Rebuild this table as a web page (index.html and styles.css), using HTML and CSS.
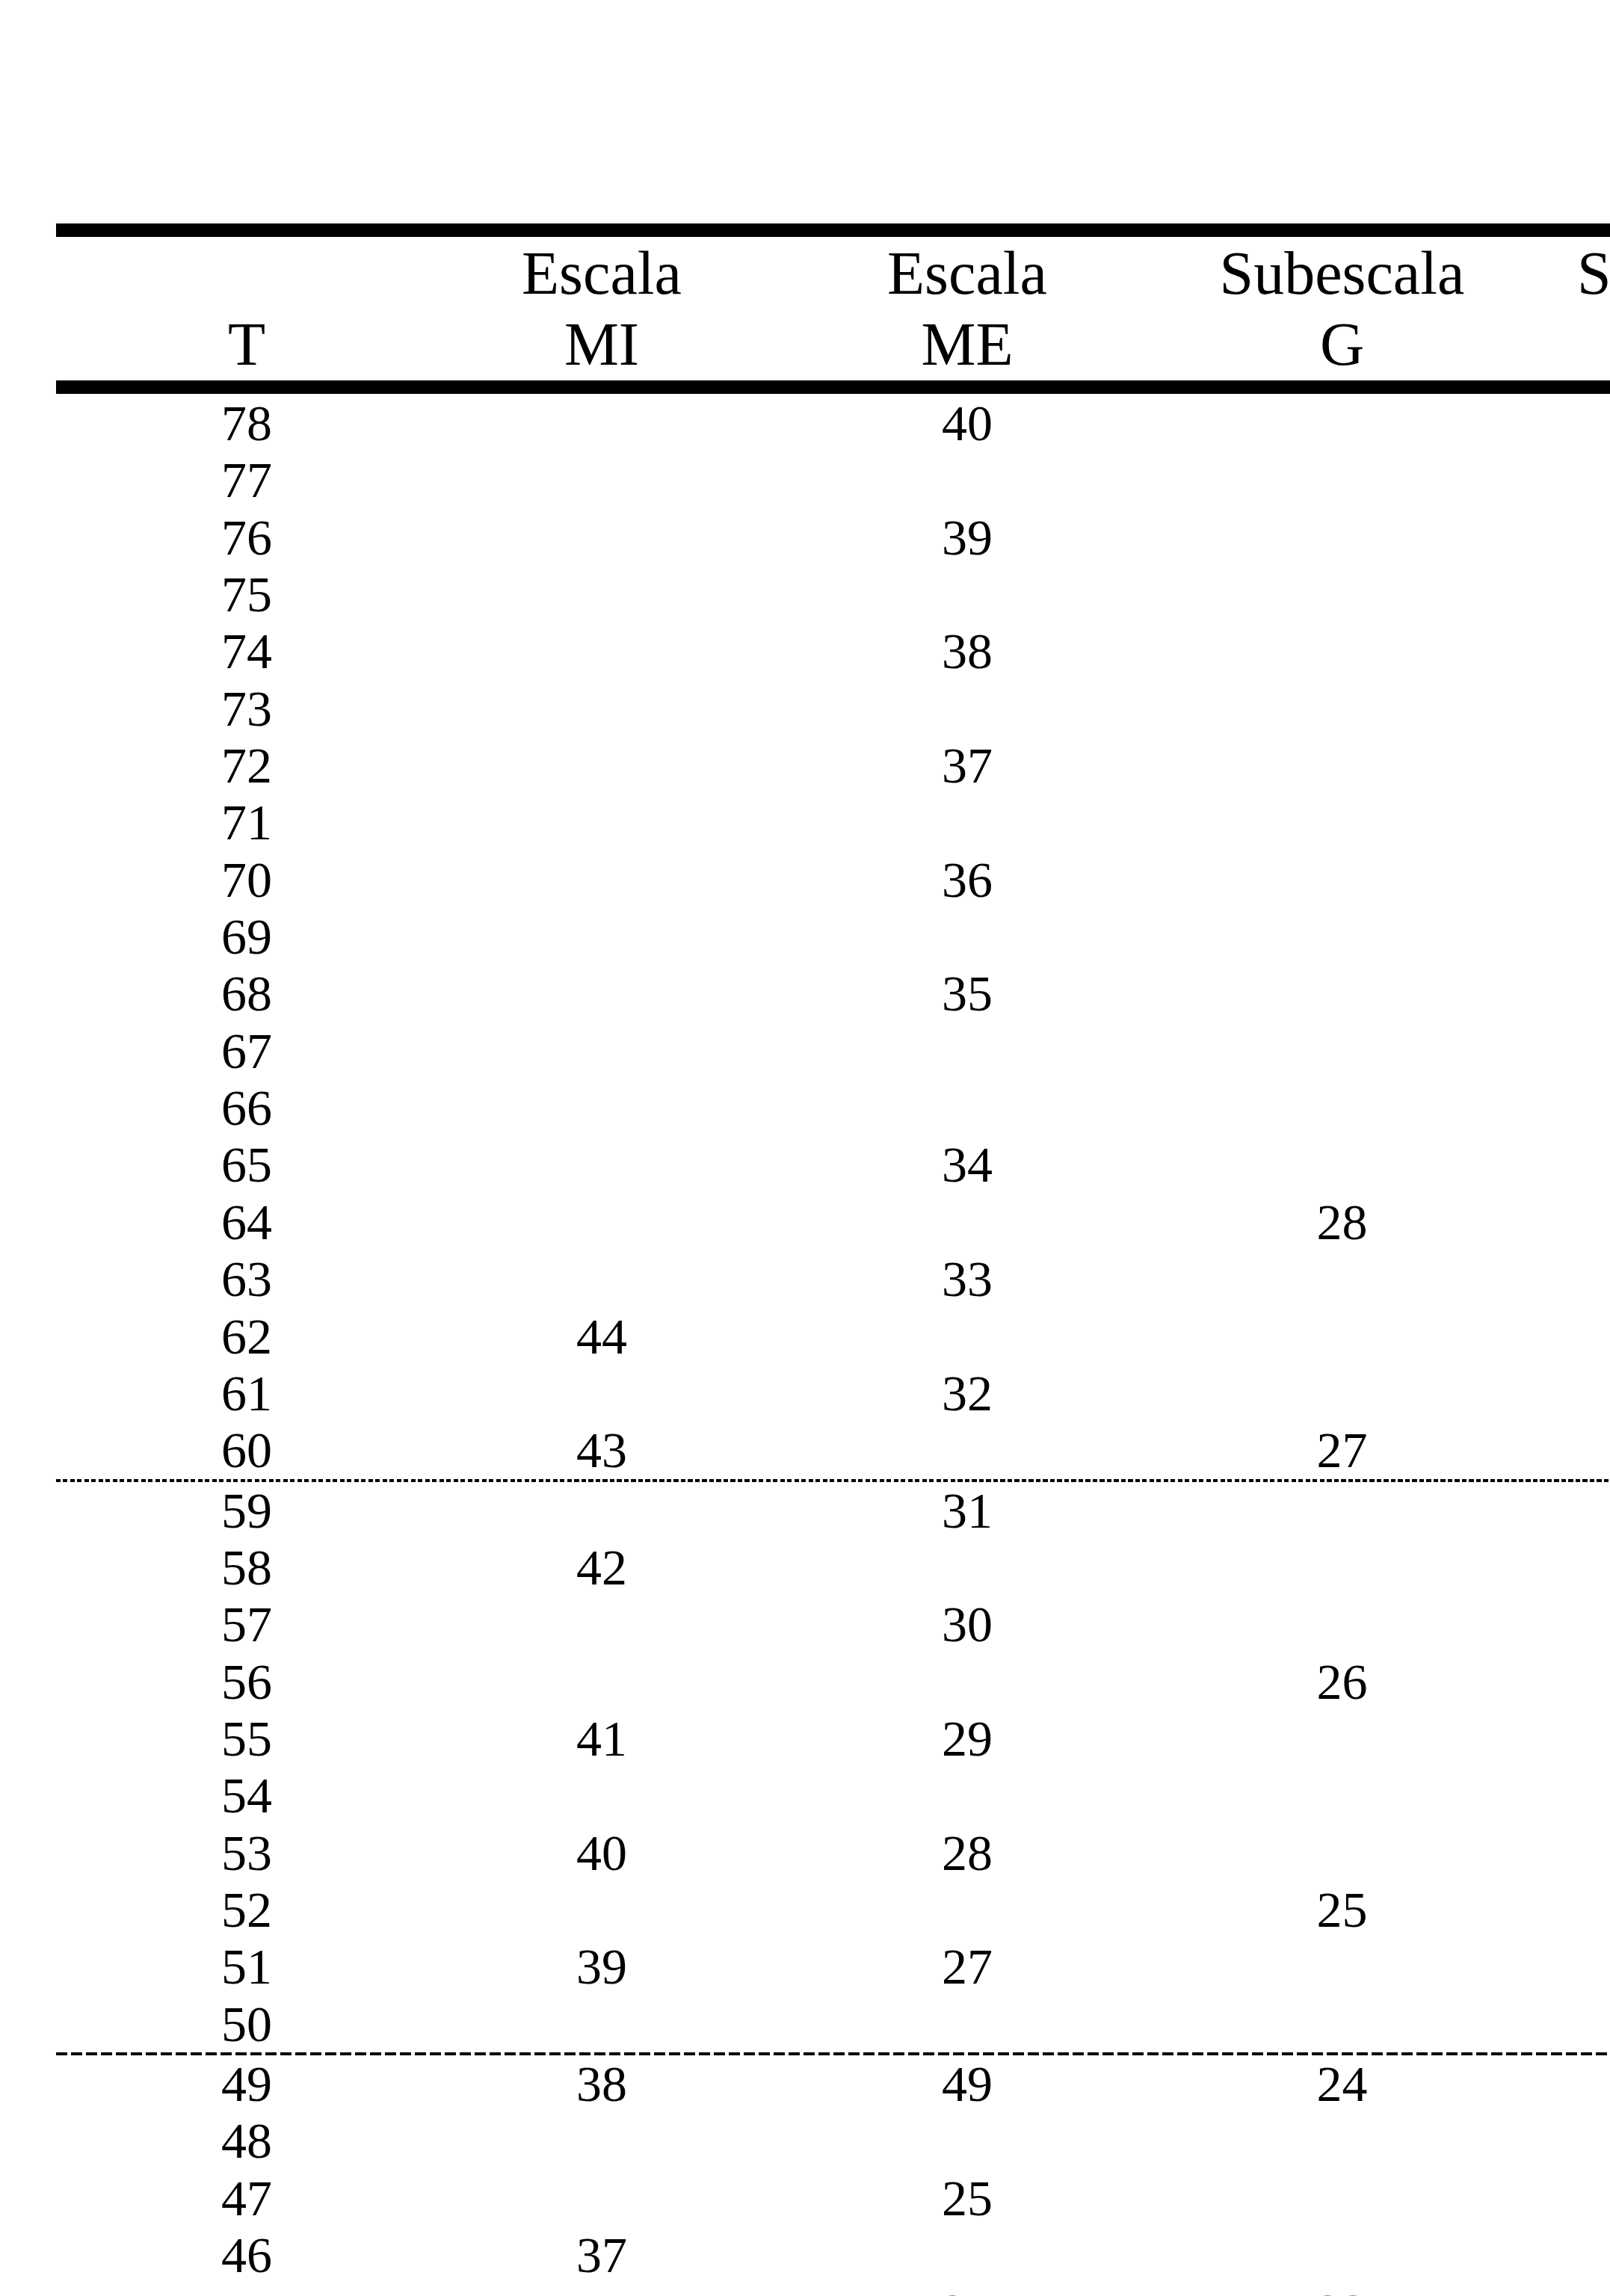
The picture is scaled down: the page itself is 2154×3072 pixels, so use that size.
FILE: index.html
```html
<!DOCTYPE html>
<html lang="es">
<head>
<meta charset="utf-8">
<title>Tabla T</title>
<link rel="stylesheet" href="styles.css">
</head>
<body>
<div class="table">
  <div class="rule-thick"></div>
  <div class="head">
    <div class="hcell"><div class="hline">&nbsp;</div><div class="hline">T</div></div>
    <div class="hcell"><div class="hline">Escala</div><div class="hline">MI</div></div>
    <div class="hcell"><div class="hline">Escala</div><div class="hline">ME</div></div>
    <div class="hcell"><div class="hline">Subescala</div><div class="hline">G</div></div>
    <div class="hcell"><div class="hline">Subescala</div><div class="hline">&nbsp;</div></div>
  </div>
  <div class="rule-thick"></div>

  <div class="group group-first">
    <div class="row"><div>78</div><div></div><div>40</div><div></div><div></div></div>
    <div class="row"><div>77</div><div></div><div></div><div></div><div></div></div>
    <div class="row"><div>76</div><div></div><div>39</div><div></div><div></div></div>
    <div class="row"><div>75</div><div></div><div></div><div></div><div></div></div>
    <div class="row"><div>74</div><div></div><div>38</div><div></div><div></div></div>
    <div class="row"><div>73</div><div></div><div></div><div></div><div></div></div>
    <div class="row"><div>72</div><div></div><div>37</div><div></div><div></div></div>
    <div class="row"><div>71</div><div></div><div></div><div></div><div></div></div>
    <div class="row"><div>70</div><div></div><div>36</div><div></div><div></div></div>
    <div class="row"><div>69</div><div></div><div></div><div></div><div></div></div>
    <div class="row"><div>68</div><div></div><div>35</div><div></div><div></div></div>
    <div class="row"><div>67</div><div></div><div></div><div></div><div></div></div>
    <div class="row"><div>66</div><div></div><div></div><div></div><div></div></div>
    <div class="row"><div>65</div><div></div><div>34</div><div></div><div></div></div>
    <div class="row"><div>64</div><div></div><div></div><div>28</div><div></div></div>
    <div class="row"><div>63</div><div></div><div>33</div><div></div><div></div></div>
    <div class="row"><div>62</div><div>44</div><div></div><div></div><div></div></div>
    <div class="row"><div>61</div><div></div><div>32</div><div></div><div></div></div>
    <div class="row"><div>60</div><div>43</div><div></div><div>27</div><div></div></div>
  </div>
  <div class="rule-dotted"></div>

  <div class="group">
    <div class="row"><div>59</div><div></div><div>31</div><div></div><div></div></div>
    <div class="row"><div>58</div><div>42</div><div></div><div></div><div></div></div>
    <div class="row"><div>57</div><div></div><div>30</div><div></div><div></div></div>
    <div class="row"><div>56</div><div></div><div></div><div>26</div><div></div></div>
    <div class="row"><div>55</div><div>41</div><div>29</div><div></div><div></div></div>
    <div class="row"><div>54</div><div></div><div></div><div></div><div></div></div>
    <div class="row"><div>53</div><div>40</div><div>28</div><div></div><div></div></div>
    <div class="row"><div>52</div><div></div><div></div><div>25</div><div></div></div>
    <div class="row"><div>51</div><div>39</div><div>27</div><div></div><div></div></div>
    <div class="row"><div>50</div><div></div><div></div><div></div><div></div></div>
  </div>
  <div class="rule-dashed"></div>

  <div class="group">
    <div class="row"><div>49</div><div>38</div><div>49</div><div>24</div><div></div></div>
    <div class="row"><div>48</div><div></div><div></div><div></div><div></div></div>
    <div class="row"><div>47</div><div></div><div>25</div><div></div><div></div></div>
    <div class="row"><div>46</div><div>37</div><div></div><div></div><div></div></div>
    <div class="row"><div>45</div><div></div><div>24</div><div>23</div><div></div></div>
  </div>
</div>
</body>
</html>
```

FILE: styles.css
```css
html, body {
  margin: 0;
  padding: 0;
  background: #ffffff;
  overflow: hidden;
}

body {
  font-family: "Liberation Serif", "Times New Roman", serif;
  color: #000000;
}

.table {
  margin: 299px 0 0 75px;
  width: 2445px;
}

.rule-thick {
  height: 18px;
  background: #000000;
}

.head {
  display: grid;
  grid-template-columns: 510px 440px 538px 465px 492px;
  padding: 1px 0;
  font-size: 82px;
  line-height: 95px;
}

.hcell {
  display: flex;
  flex-direction: column;
  text-align: center;
}

.hline {
  height: 95px;
  white-space: nowrap;
}

.group-first {
  padding-top: 1px;
}

.row {
  display: grid;
  grid-template-columns: 510px 440px 538px 465px 492px;
  height: 76.35px;
  font-size: 68px;
  line-height: 76.35px;
  text-align: center;
}

.rule-dotted {
  height: 4px;
  background: repeating-linear-gradient(to right, #000000 0 6px, transparent 6px 9.5px);
}

.rule-dashed {
  height: 4px;
  background: repeating-linear-gradient(to right, #000000 0 15px, transparent 15px 20px);
}
```
